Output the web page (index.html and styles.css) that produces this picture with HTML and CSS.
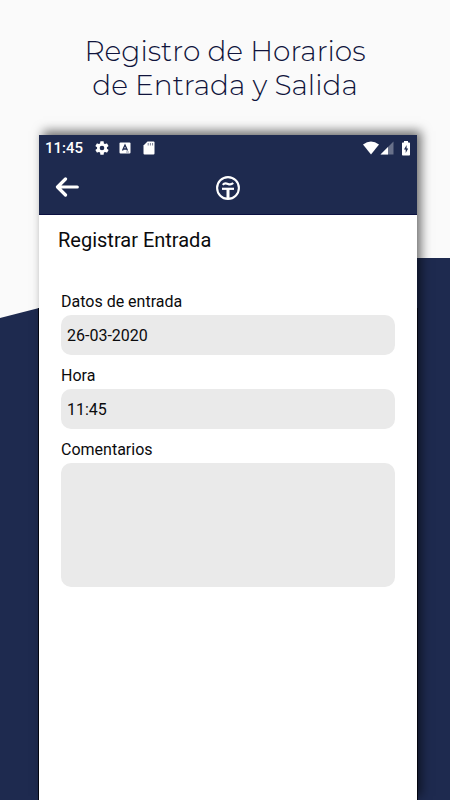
FILE: index.html
```html
<!DOCTYPE html>
<html lang="es">
<head>
<meta charset="utf-8">
<meta name="viewport" content="width=device-width, initial-scale=1">
<title>Registrar Entrada</title>
<link rel="stylesheet" href="styles.css">
</head>
<body>
<div class="page">
  <h1 class="headline">Registro de Horarios<br>de Entrada y Salida</h1>
  <main class="phone">
    <div class="status">
      <span class="clock">11:45</span>
      <svg class="gear" viewBox="0 0 24 24" width="16" height="16" fill="#fff" aria-hidden="true"><path d="M19.4 13a7.8 7.8 0 0 0 0-2l2.1-1.600a.5.5 0 0 0 .1-.6l-2-3.500a.5.5 0 0 0-.6-.2l-2.500 1a7.300 7.300 0 0 0-1.700-1L14.500 2.400a.5.5 0 0 0-.5-.4h-4a.5.5 0 0 0-.5.4l-.4 2.700a7.700 7.700 0 0 0-1.700 1l-2.500-1a.5.5 0 0 0-.6.2l-2 3.500a.5.5 0 0 0 .1.6L4.600 11a7.900 7.900 0 0 0 0 2l-2.200 1.600a.5.5 0 0 0-.1.6l2 3.500c.1.200.4.300.6.200l2.500-1a7.300 7.300 0 0 0 1.700 1l.4 2.700c0 .200.200.400.500.400h4c.3 0 .5-.2.500-.4l.4-2.700a7.700 7.700 0 0 0 1.700-1l2.500 1c.2.100.5 0 .6-.2l2-3.500a.5.5 0 0 0-.1-.6zM12 15.500a3.500 3.500 0 1 1 0-7 3.500 3.500 0 0 1 0 7z"/></svg>
      <svg class="lang" viewBox="0 0 12 12" width="12" height="12" aria-hidden="true"><rect x=".5" y=".5" width="11" height="11" rx="1" fill="#fff"/><path d="M3.500 8.500 6 3l2.500 5.500M4.500 7h3" fill="none" stroke="#1e2a4f" stroke-width="1.300"/><path d="M7 10h3" stroke="#1e2a4f" stroke-width=".5"/></svg>
      <svg class="card" viewBox="0 0 12 14" width="12" height="14" aria-hidden="true"><path d="M4.500.5H10.500a1 1 0 0 1 1 1v11a1 1 0 0 1-1 1h-9a1 1 0 0 1-1-1v-8z" fill="#fff"/><path d="M5.200 2v2.500M7.400 2v2.500M9.600 2v2.500" stroke="#1e2a4f" stroke-width=".6"/></svg>
      <span class="spacer"></span>
      <svg viewBox="0 0 18 14" width="18" height="14" aria-hidden="true"><path d="M1 3.500Q9-2.500 17 3.500L9 13.500z" fill="#fff"/></svg>
      <svg viewBox="0 0 14 14" width="14" height="14" aria-hidden="true"><path d="M13.500.5v13H.5z" fill="#69718a"/><path d="M8 6v7.500H.5z" fill="#fff"/></svg>
      <svg class="battery" viewBox="0 0 10 15" width="10" height="15" aria-hidden="true"><path d="M3 0h4v1.500h1.200q.8 0 .8.800v11.400q0 .8-.8.800H1.800q-.8 0-.8-.8V2.300q0-.8.800-.8H3z" fill="#fff"/><path d="M5.600 4 3 8.500h1.700V12L7.200 7.500H5.600z" fill="#1e2a4f"/></svg>
    </div>
    <header class="bar">
      <button class="back" type="button" aria-label="Volver"><svg viewBox="0 0 24 20" width="24" height="20" fill="none" stroke="#fff" stroke-width="3.200" stroke-linecap="round" stroke-linejoin="round"><path d="M22.300 10H3M10.500 2 2.500 10l8 8"/></svg></button>
      <svg class="logo" viewBox="0 0 24 24" width="24" height="24" fill="none" stroke="#fff" aria-hidden="true"><circle cx="12" cy="12" r="10.900" stroke-width="2.100"/><path d="M6.800 8.800C8.500 6.600 10.200 7.200 12 8S15.500 8.700 17.200 7" stroke-width="2.200"/><path d="M6 12.800h12" stroke-width="2.200"/><path d="M12 13v9" stroke-width="3"/></svg>
    </header>
    <form class="form">
      <h2 class="title">Registrar Entrada</h2>
      <div class="field"><label for="fecha">Datos de entrada</label><input id="fecha" type="text" value="26-03-2020"></div>
      <div class="field"><label for="hora">Hora</label><input id="hora" type="text" value="11:45"></div>
      <div class="field"><label for="comentarios">Comentarios</label><textarea id="comentarios"></textarea></div>
    </form>
  </main>
</div>
</body>
</html>
```

FILE: styles.css
```css
* { box-sizing: border-box; }
body { margin: 0; background: #fafafa; font-family: Roboto, sans-serif; color: #0b0b0d; }
.page { position: relative; display: flex; flex-direction: column; min-height: 100vh; }
.page::before {
  content: "";
  position: absolute;
  inset: 258px 0 0;
  background: #1e2a4f;
  clip-path: polygon(0 60px, 52% 0, 100% 0, 100% 100%, 0 100%);
}
.headline {
  margin: 0;
  padding: 34px 0 33px;
  font-family: Montserrat, Inter, sans-serif;
  font-size: 28px;
  font-weight: 300;
  line-height: 34px;
  text-align: center;
  color: #10143c;
}
.phone {
  position: relative;
  flex: 1;
  display: flex;
  flex-direction: column;
  margin: 0 33px 0 39px;
  background: #fff;
  box-shadow: 4px -4px 10px #00000090;
}
.phone::before {
  content: "";
  position: absolute;
  inset: 173px -1px 0;
  border: solid #03050f;
  border-width: 0 1px;
  pointer-events: none;
}
.status {
  display: flex;
  align-items: center;
  height: 26px;
  padding: 0 6px;
  background: #1e2a4f;
  color: #fff;
}
.clock { font-size: 15px; font-weight: 500; }
.gear { margin-left: 11px; }
.lang { margin-left: 9px; }
.card { margin-left: 12px; }
.spacer { flex: 1; }
.battery { margin-left: 7px; }
.bar {
  display: grid;
  grid-template-columns: 1fr auto 1fr;
  align-items: center;
  height: 54px;
  padding: 0 16px;
  background: #1e2a4f;
  border-bottom: 1px solid #0b1040;
}
.back { justify-self: start; display: flex; padding: 0 0 2px; border: 0; background: none; }
.form { display: flex; flex-direction: column; gap: 10px; padding: 13px 22px; }
.title { margin: 0 0 29px -3px; font-size: 20px; font-weight: 400; line-height: 24px; }
.field { display: flex; flex-direction: column; gap: 3px; }
.field label { font-size: 16px; line-height: 21px; }
.field input, .field textarea {
  width: 100%;
  height: 40px;
  padding: 0 6px;
  border: 0;
  border-radius: 10px;
  background: #eaeaea;
  color: inherit;
  font-family: inherit;
  font-size: 16px;
}
.field textarea { height: 124px; padding: 10px 6px; resize: none; }
```
